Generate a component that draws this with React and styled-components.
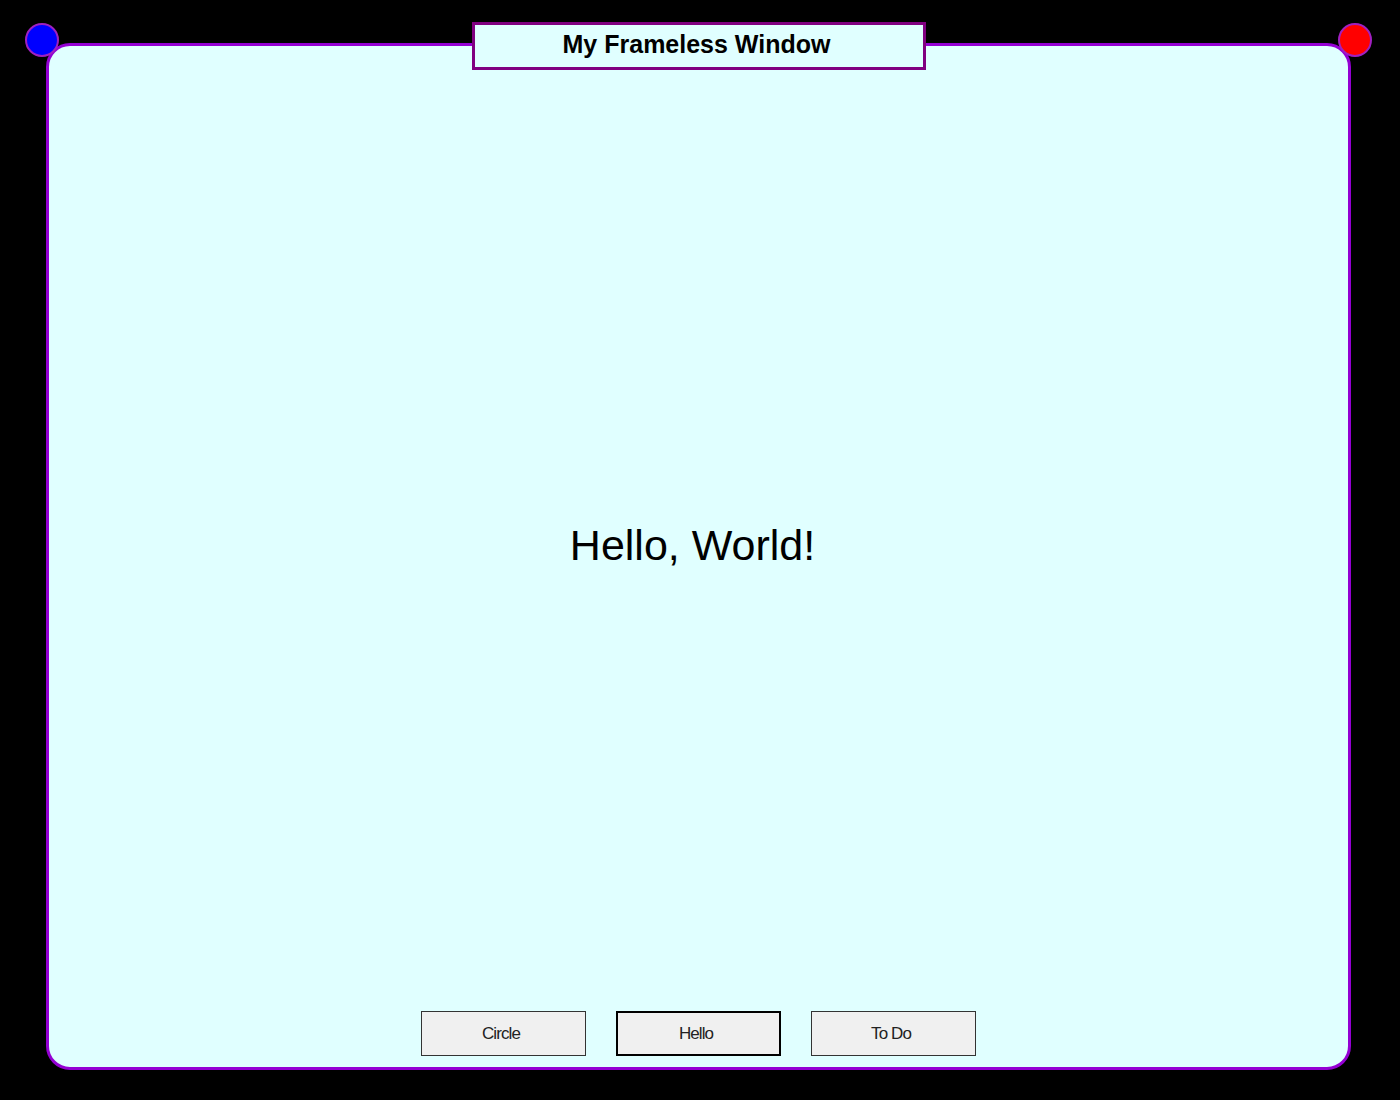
import styled, { createGlobalStyle } from "styled-components";

const GlobalStyle = createGlobalStyle`
  html, body {
    margin: 0;
    padding: 0;
    background: #000;
  }
  body {
    font-family: "Liberation Sans", Arial, sans-serif;
  }
`;

const Screen = styled.div`
  width: 1400px;
  height: 1100px;
  background: #000;
  padding: 43px 49px 30px 46px;
  box-sizing: border-box;
  display: flex;
`;

const Window = styled.div`
  position: relative;
  flex: 1;
  background: #e0ffff;
  border: 3px solid #9400d3;
  border-radius: 24px;
  display: flex;
  flex-direction: column;
`;

const TitleBox = styled.div`
  position: absolute;
  top: -24px;
  left: 50%;
  transform: translateX(-50%);
  width: 454px;
  height: 48px;
  box-sizing: border-box;
  border: 3px solid #800080;
  background: #e0ffff;
  display: flex;
  align-items: center;
  justify-content: center;
  padding: 0 4px 4px 0;
  font-size: 25px;
  font-weight: 700;
  color: #000;
`;

const Dot = styled.div`
  position: absolute;
  top: -23px;
  ${(p) => (p.$side === "left" ? "left: -24px;" : "right: -24px;")}
  width: 34px;
  height: 34px;
  box-sizing: border-box;
  border-radius: 50%;
  border: 2px solid #a020c0;
  background: ${(p) => p.$color};
`;

const Stage = styled.div`
  flex: 1;
  display: flex;
  align-items: center;
  justify-content: center;
  padding-top: 34px;
  padding-right: 12px;
`;

const Greeting = styled.div`
  font-size: 43px;
  color: #000;
`;

const ButtonRow = styled.div`
  display: flex;
  justify-content: center;
  gap: 30px;
  padding-bottom: 11px;
`;

const Button = styled.button`
  width: 165px;
  height: 45px;
  box-sizing: border-box;
  background: #f0f0f0;
  border: ${(p) => (p.$default ? "2px solid #000" : "1px solid #333")};
  font-family: "Liberation Sans", Arial, sans-serif;
  font-size: 17px;
  letter-spacing: -0.9px;
  color: #222;
  padding: 0 5px 0 0;
  cursor: pointer;
`;

export default function App() {
  return (
    <>
      <GlobalStyle />
      <Screen>
        <Window>
          <Dot $side="left" $color="#0000ff" />
          <Dot $side="right" $color="#ff0000" />
          <TitleBox>My Frameless Window</TitleBox>
          <Stage>
            <Greeting>Hello, World!</Greeting>
          </Stage>
          <ButtonRow>
            <Button>Circle</Button>
            <Button $default>Hello</Button>
            <Button>To Do</Button>
          </ButtonRow>
        </Window>
      </Screen>
    </>
  );
}
